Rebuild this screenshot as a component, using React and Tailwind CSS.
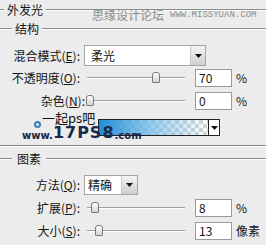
import React from "react";

const font = { fontFamily: '"Noto Sans CJK SC", "Liberation Sans", sans-serif' };

const Legend = ({ text, lead }) => (
  <div className="flex items-center h-[19px]">
    <div className={`${lead} h-px bg-[#8c8c8c] border-b border-white box-content`} />
    <span className="px-[3px] leading-none">{text}</span>
    <div className="flex-1 h-px bg-[#8c8c8c] border-b border-white box-content" />
  </div>
);

const Slider = ({ pos, ml = "ml-[7px]" }) => (
  <div className={`relative w-[98px] h-[18px] ${ml}`}>
    <div className="absolute left-0 right-0 top-[8px] h-px bg-[#a0a0a0] border-b border-white box-content" />
    <div
      className="absolute top-[3px] w-[8px] h-[11px] rounded-t-[3px] rounded-b-[1px] border border-[#7a7a7a] bg-gradient-to-b from-white to-[#d4d4d4]"
      style={{ left: pos }}
    />
  </div>
);

const NumBox = ({ value, unit }) => (
  <>
    <div className="ml-[10px] w-[37px] h-[18px] bg-white border border-[#9a9a9a] pl-[3px] leading-[16px]">{value}</div>
    <span className="ml-[4px] leading-none">{unit}</span>
  </>
);

const Arrow = () => (
  <svg width="7" height="4" viewBox="0 0 7 4">
    <path d="M0 0h7L3.5 4z" fill="#111" />
  </svg>
);

export default function App() {
  return (
    <div className="w-[266px] h-[245px] bg-[#ececec] relative overflow-hidden text-[12px] text-[#151515]" style={font}>
      <Legend text="外发光" lead="w-[4px]" />
      <Legend text="结构" lead="w-[12px]" />

      <div className="flex items-center h-[21px] mt-[7px]">
        <span className="w-[80px] text-right">混合模式(<u>E</u>):</span>
        <div className="ml-[4px] w-[122px] h-[21px] bg-white border border-[#a5a5a5] flex items-center">
          <span className="flex-1 pl-[6px]">柔光</span>
          <div className="w-[15px] h-full border-l border-[#c8c8c8] bg-gradient-to-b from-[#f4f4f4] to-[#cfcfcf] flex items-center justify-center">
            <Arrow />
          </div>
        </div>
      </div>

      <div className="flex items-center h-[18px] mt-[3px]">
        <span className="w-[80px] text-right">不透明度(<u>O</u>):</span>
        <Slider pos={65} />
        <NumBox value="70" unit="%" />
      </div>

      <div className="flex items-center h-[18px] mt-[5px]">
        <span className="w-[85px] text-right">杂色(<u>N</u>):</span>
        <Slider pos={-1} ml="ml-[2px]" />
        <NumBox value="0" unit="%" />
      </div>

      <div className="flex items-center h-[17px] mt-[9px]">
        <div className="ml-[98px] w-[122px] h-[17px] border border-[#222] flex">
          <div className="flex-1 bg-[repeating-conic-gradient(#d6d6d6_0_25%,#ffffff_0_50%)] bg-[length:8px_8px] relative">
            <div className="absolute inset-0 bg-gradient-to-r from-[#1f8fd6] via-[#6fbbe8]/70 to-transparent" />
          </div>
          <div className="w-[11px] border-l border-[#222] bg-white flex items-center justify-center">
            <Arrow />
          </div>
        </div>
      </div>

      <div className="mt-[9px] h-px bg-[#8a8a8a] border-b border-white box-content" />

      <div className="flex items-center h-[24px]">
        <div className="w-[12px] h-px bg-[#8c8c8c] border-b border-white box-content" />
        <span className="px-[5px] leading-none">图素</span>
        <div className="flex-1 h-px bg-[#8c8c8c] border-b border-white box-content" />
      </div>

      <div className="flex items-center h-[20px] mt-[4px]">
        <span className="w-[80px] text-right">方法(<u>Q</u>):</span>
        <div className="ml-[4px] w-[54px] h-[20px] bg-white border border-[#a5a5a5] flex items-center">
          <span className="flex-1 pl-[3px]">精确</span>
          <div className="w-[16px] h-full border-l border-[#c8c8c8] bg-gradient-to-b from-[#f4f4f4] to-[#cfcfcf] flex items-center justify-center">
            <Arrow />
          </div>
        </div>
      </div>

      <div className="flex items-center h-[18px] mt-[4px]">
        <span className="w-[80px] text-right">扩展(<u>P</u>):</span>
        <Slider pos={4} />
        <NumBox value="8" unit="%" />
      </div>

      <div className="flex items-center h-[18px] mt-[5px]">
        <span className="w-[80px] text-right">大小(<u>S</u>):</span>
        <Slider pos={8} />
        <NumBox value="13" unit="像素" />
      </div>

      {/* watermarks */}
      <div className="absolute left-[92px] top-[9px] flex items-center gap-[6px] text-[#8d8d8d]">
        <span className="text-[12px] leading-none">思缘设计论坛</span>
        <span className="text-[9px] leading-none" style={{ fontFamily: '"Liberation Mono", monospace' }}>WWW.MISSYUAN.COM</span>
      </div>
      <div className="absolute left-[42px] top-[111px] text-[13px] leading-none text-[#111]">一起ps吧</div>
      <div className="absolute left-[22px] top-[125px] flex items-end leading-none" style={{ fontFamily: '"DejaVu Sans", sans-serif' }}>
        <span className="text-[10px] font-bold text-[#1a2340]">www.</span>
        <span className="text-[16px] font-bold text-[#1a2a4a] tracking-[1px]">17PS8</span>
        <span className="text-[10px] font-bold text-[#1a2340]">.com</span>
      </div>
      <div className="absolute left-[34px] top-[121px] w-[7px] h-[7px] rounded-full border-2 border-[#3a7fc0]" />
    </div>
  );
}
